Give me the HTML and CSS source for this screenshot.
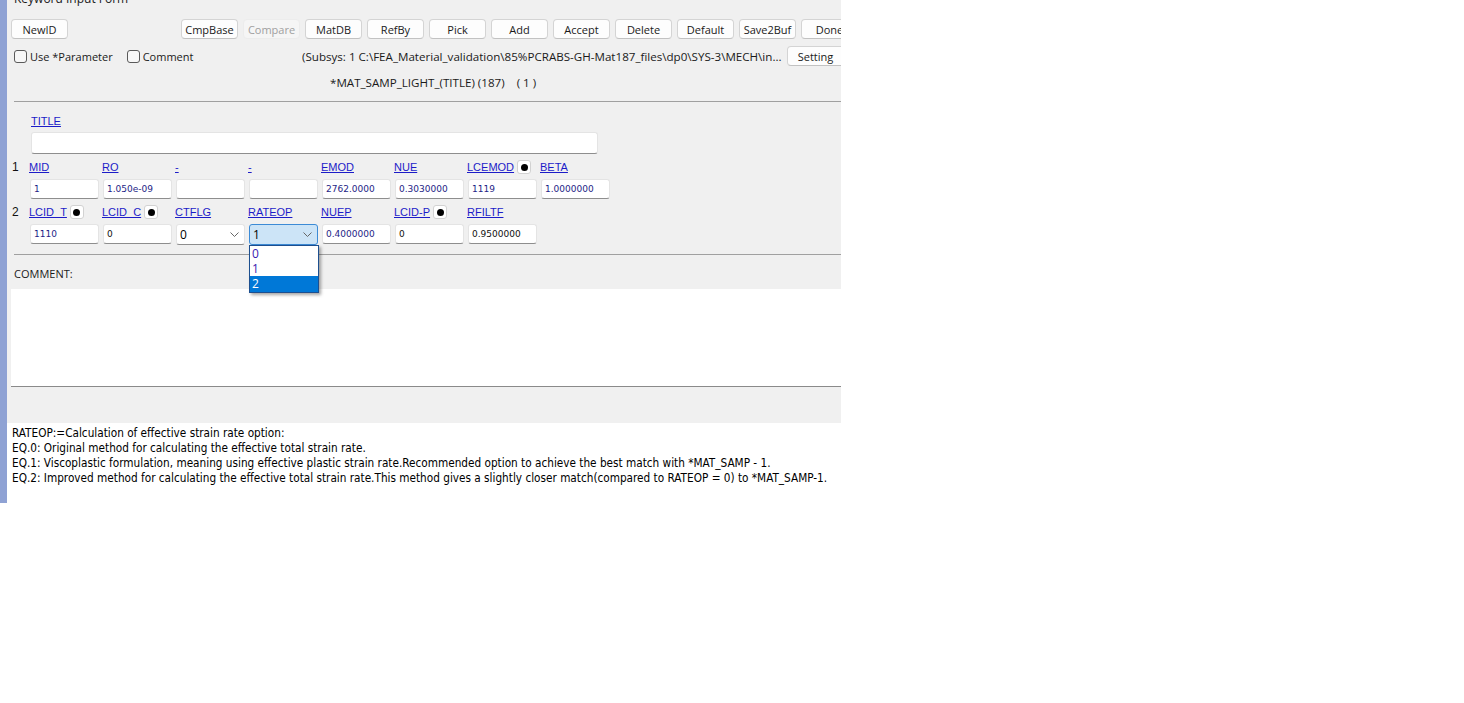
FILE: index.html
```html
<!DOCTYPE html>
<html>
<head>
<meta charset="utf-8">
<title>Keyword Input Form</title>
<link rel="stylesheet" href="styles.css">
</head>
<body>
<div class="window">
  <div class="caption">Keyword Input Form</div>
  <div class="toolbar">
    <div class="btn">NewID</div>
    <div class="btn push">CmpBase</div>
    <div class="btn disabled">Compare</div>
    <div class="btn">MatDB</div>
    <div class="btn">RefBy</div>
    <div class="btn">Pick</div>
    <div class="btn">Add</div>
    <div class="btn">Accept</div>
    <div class="btn">Delete</div>
    <div class="btn">Default</div>
    <div class="btn">Save2Buf</div>
    <div class="btn">Done</div>
  </div>
  <div class="optrow">
    <div class="checks">
      <div class="chk"><span class="box"></span>Use *Parameter</div>
      <div class="chk"><span class="box"></span>Comment</div>
    </div>
    <div class="path">(Subsys: 1 C:\FEA_Material_validation\85%PCRABS-GH-Mat187_files\dp0\SYS-3\MECH\in...</div>
    <div class="btn setting">Setting</div>
  </div>
  <div class="kwtitle">*MAT_SAMP_LIGHT_(TITLE) (187)    ( 1 )</div>
  <div class="sep"></div>
  <div class="form">
    <div class="titlelbl"><span class="lbl">TITLE</span></div>
    <div class="field wide"></div>
    <div class="grid">
      <div class="rownum">1</div>
      <div class="cell-l"><span class="lbl">MID</span></div>
      <div class="cell-l"><span class="lbl">RO</span></div>
      <div class="cell-l"><span class="lbl">-</span></div>
      <div class="cell-l"><span class="lbl">-</span></div>
      <div class="cell-l"><span class="lbl">EMOD</span></div>
      <div class="cell-l"><span class="lbl">NUE</span></div>
      <div class="cell-l"><span class="lbl">LCEMOD</span><span class="dot"></span></div>
      <div class="cell-l"><span class="lbl">BETA</span></div>

      <div></div>
      <div class="field val">1</div>
      <div class="field val">1.050e-09</div>
      <div class="field"></div>
      <div class="field"></div>
      <div class="field val">2762.0000</div>
      <div class="field val">0.3030000</div>
      <div class="field val">1119</div>
      <div class="field val">1.0000000</div>

      <div class="rownum">2</div>
      <div class="cell-l"><span class="lbl">LCID_T</span><span class="dot"></span></div>
      <div class="cell-l"><span class="lbl">LCID_C</span><span class="dot"></span></div>
      <div class="cell-l"><span class="lbl">CTFLG</span></div>
      <div class="cell-l"><span class="lbl">RATEOP</span></div>
      <div class="cell-l"><span class="lbl">NUEP</span></div>
      <div class="cell-l"><span class="lbl">LCID-P</span><span class="dot"></span></div>
      <div class="cell-l"><span class="lbl">RFILTF</span></div>
      <div></div>

      <div></div>
      <div class="field val">1110</div>
      <div class="field">0</div>
      <div class="select"><span>0</span><svg class="chev" width="9" height="5" viewBox="0 0 9 5"><polyline points="0.5,0.5 4.5,4.5 8.5,0.5" fill="none" stroke="#666" stroke-width="1"/></svg></div>
      <div class="select active"><span>1</span><svg class="chev" width="9" height="5" viewBox="0 0 9 5"><polyline points="0.5,0.5 4.5,4.5 8.5,0.5" fill="none" stroke="#666" stroke-width="1"/></svg>
        <div class="droplist">
          <div class="opt">0</div>
          <div class="opt">1</div>
          <div class="opt sel">2</div>
        </div>
      </div>
      <div class="field val">0.4000000</div>
      <div class="field">0</div>
      <div class="field">0.9500000</div>
      <div></div>
    </div>
  </div>
  <div class="sep sep2"></div>
  <div class="comment-label">COMMENT:</div>
  <div class="comment-box"></div>
  <div class="band"></div>
  <div class="help">
    <div>RATEOP:=Calculation of effective strain rate option:</div>
    <div>EQ.0: Original method for calculating the effective total strain rate.</div>
    <div>EQ.1: Viscoplastic formulation, meaning using effective plastic strain rate.Recommended option to achieve the best match with *MAT_SAMP - 1.</div>
    <div>EQ.2: Improved method for calculating the effective total strain rate.This method gives a slightly closer match(compared to RATEOP = 0) to *MAT_SAMP-1.</div>
  </div>
</div>
</body>
</html>
```

FILE: styles.css
```css
html, body {
  margin: 0;
  padding: 0;
  background: #ffffff;
}

.window {
  width: 834px;
  height: 503px;
  border-left: 7px solid #8fa2d4;
  background: #f0f0f0;
  overflow: hidden;
  font-family: "Open Sans", "Noto Sans", sans-serif;
  font-size: 11px;
  color: #1a1a1a;
  display: flex;
  flex-direction: column;
}

.caption {
  height: 19px;
  flex: 0 0 19px;
  padding-left: 7px;
  line-height: 0;
  font-size: 12px;
  margin-top: -1px;
  white-space: nowrap;
}

.toolbar {
  display: flex;
  gap: 5px;
  padding-left: 4px;
  height: 20px;
  flex: 0 0 20px;
  white-space: nowrap;
  margin-top: 1px;
}

.btn {
  flex: 0 0 57px;
  width: 57px;
  height: 20px;
  box-sizing: border-box;
  background: #fdfdfd;
  border: 1px solid #d4d4d4;
  border-bottom-color: #c2c2c2;
  border-radius: 4px;
  display: flex;
  align-items: center;
  justify-content: center;
  line-height: 1;
}

.btn.push {
  margin-left: 108px;
}

.btn.disabled {
  background: #f5f5f5;
  border-color: #ececec;
  color: #a0a0a0;
}

.optrow {
  display: flex;
  align-items: center;
  height: 20px;
  flex: 0 0 20px;
  margin-top: 7px;
  white-space: nowrap;
}

.checks {
  flex: 0 0 295px;
  box-sizing: border-box;
  padding-left: 7px;
  display: flex;
  align-items: center;
}

.chk {
  display: flex;
  align-items: center;
  margin-right: 14px;
}

.box {
  width: 13px;
  height: 13px;
  box-sizing: border-box;
  border: 1px solid #5a5a5a;
  border-radius: 3px;
  background: #f7f7f7;
  margin-right: 3px;
}

.path {
  flex: 0 0 480px;
  overflow: hidden;
  font-size: 11.6px;
}

.btn.setting {
  margin-left: 5px;
}

.kwtitle {
  height: 30px;
  flex: 0 0 30px;
  box-sizing: border-box;
  padding-top: 3px;
  display: flex;
  align-items: center;
  padding-left: 323px;
  white-space: pre;
  font-size: 11.6px;
}

.sep {
  height: 1px;
  flex: 0 0 1px;
  background: #a0a0a0;
  margin-left: 7px;
  margin-top: 5px;
}

.form {
  padding-left: 5px;
  position: relative;
}

.titlelbl {
  margin-top: 9px;
  margin-left: 19px;
  height: 20px;
  display: flex;
  align-items: center;
}

.lbl {
  font-family: "Liberation Sans", Arial, sans-serif;
  font-size: 11px;
  color: #1c1cc8;
  text-decoration: underline;
  white-space: nowrap;
}

.field {
  box-sizing: border-box;
  height: 20px;
  background: #ffffff;
  border: 1px solid #e4e4e4;
  border-bottom-color: #8e8e8e;
  border-radius: 3px;
  font-family: "DejaVu Sans", Verdana, sans-serif;
  font-size: 9px;
  color: #111;
  padding-left: 3px;
  display: flex;
  align-items: center;
  white-space: nowrap;
}

.field.val {
  color: #1e1e86;
}

.field.wide {
  width: 567px;
  height: 22px;
  margin-left: 19px;
  margin-top: 1px;
}

.grid {
  display: grid;
  grid-template-columns: 14px repeat(8, 69px);
  grid-template-rows: 20px 20px 20px 20px;
  column-gap: 4px;
  row-gap: 2.5px;
  margin-top: 2px;
}

.rownum {
  font-family: "Liberation Sans", Arial, sans-serif;
  font-size: 12px;
  color: #111;
  display: flex;
  align-items: center;
  padding-top: 1px;
}

.cell-l {
  display: flex;
  align-items: center;
  gap: 3px;
  padding-top: 2px;
  margin-left: -1px;
}

.dot {
  width: 14px;
  height: 14px;
  box-sizing: border-box;
  border: 1px solid #d2d2d2;
  border-radius: 3px;
  background: #fff;
  display: flex;
  align-items: center;
  justify-content: center;
}

.dot::after {
  content: "";
  width: 7px;
  height: 7px;
  border-radius: 50%;
  background: #000;
}

.select {
  box-sizing: border-box;
  height: 21px;
  background: #ffffff;
  border: 1px solid #e4e4e4;
  border-bottom-color: #8e8e8e;
  border-radius: 3px;
  padding-left: 3px;
  padding-right: 5px;
  display: flex;
  align-items: center;
  justify-content: space-between;
  font-size: 12px;
  color: #000;
  position: relative;
}

.select.active {
  background: #cce4f7;
  border: 1px solid #3c8bd6;
}

.droplist {
  position: absolute;
  left: -1px;
  top: 20px;
  width: 70px;
  box-sizing: border-box;
  background: #fff;
  border: 1px solid #1d4f8f;
  box-shadow: 2px 2px 3px rgba(0, 0, 0, 0.35);
  font-size: 12px;
  z-index: 5;
}

.opt {
  height: 15px;
  line-height: 15px;
  padding-left: 2px;
  color: #3a20b0;
}

.opt.sel {
  background: #0078d7;
  color: #ffffff;
  height: 16px;
}

.sep2 {
  margin-top: 10.5px;
}

.comment-label {
  margin-top: 9px;
  height: 20px;
  flex: 0 0 20px;
  line-height: 20px;
  padding-left: 7px;
}

.comment-box {
  margin-top: 5px;
  margin-left: 4px;
  height: 97px;
  flex: 0 0 97px;
  background: #ffffff;
  border-bottom: 1px solid #8a8a8a;
}

.band {
  height: 36px;
  flex: 0 0 36px;
}

.help {
  flex: 1 1 auto;
  background: #ffffff;
  padding-left: 5px;
  padding-top: 3px;
  font-family: "Liberation Sans Narrow", "DejaVu Sans Condensed", sans-serif;
  font-size: 11.7px;
  line-height: 15px;
  color: #000;
  white-space: nowrap;
}
```
